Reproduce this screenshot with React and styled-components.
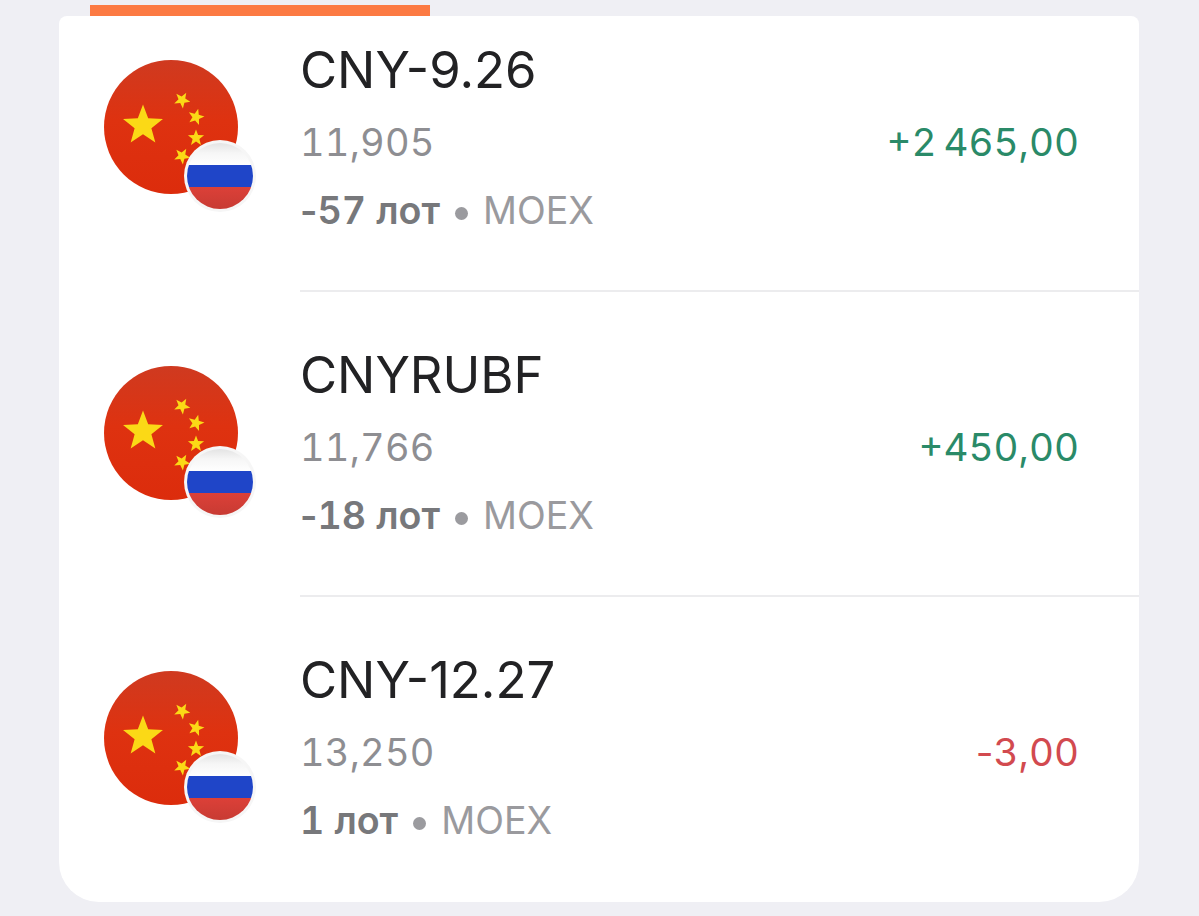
import React from 'react'
import styled, { createGlobalStyle } from 'styled-components'

const positions = [
  { id: 1, name: 'CNY-9.26', price: '11,905', lots: '-57 лот', result: '+2\u202f465,00', up: true },
  { id: 2, name: 'CNYRUBF', price: '11,766', lots: '-18 лот', result: '+450,00', up: true },
  { id: 3, name: 'CNY-12.27', price: '13,250', lots: '1 лот', result: '-3,00', up: false },
]

const starPoints = (cx, cy, r, rot = -90) => {
  const pts = []
  for (let i = 0; i < 10; i++) {
    const rad = i % 2 ? r * 0.42 : r
    const a = ((rot + i * 36) * Math.PI) / 180
    pts.push(`${(cx + rad * Math.cos(a)).toFixed(2)},${(cy + rad * Math.sin(a)).toFixed(2)}`)
  }
  return pts.join(' ')
}

const FlagIcon = () => (
  <svg width="154" height="154" viewBox="0 0 154 154">
    <defs>
      <linearGradient id="cnRed" x1="0" y1="0" x2="0" y2="1">
        <stop offset="0" stopColor="#cf3a20" />
        <stop offset="0.45" stopColor="#de3210" />
        <stop offset="1" stopColor="#dc2c0c" />
      </linearGradient>
      <clipPath id="ruClip">
        <circle cx="116" cy="116" r="33" />
      </clipPath>
      <linearGradient id="ruWhite" x1="0" y1="0" x2="0" y2="1">
        <stop offset="0" stopColor="#dedede" />
        <stop offset="0.5" stopColor="#f6f6f6" />
        <stop offset="1" stopColor="#ffffff" />
      </linearGradient>
      <linearGradient id="ruRed" x1="0" y1="0" x2="0" y2="1">
        <stop offset="0" stopColor="#dc4038" />
        <stop offset="1" stopColor="#c43a32" />
      </linearGradient>
    </defs>
    <circle cx="67" cy="67" r="67" fill="url(#cnRed)" />
    <polygon points={starPoints(39, 65.5, 21)} fill="#fbd916" />
    <polygon points={starPoints(78, 40, 8.5, -60)} fill="#fbd916" />
    <polygon points={starPoints(92, 57, 8.5, -75)} fill="#fbd916" />
    <polygon points={starPoints(92, 78, 8.5, -90)} fill="#fbd916" />
    <polygon points={starPoints(78, 96, 8.5, -60)} fill="#fbd916" />
    <circle cx="116" cy="116" r="36" fill="#f6f6f6" />
    <g clipPath="url(#ruClip)">
      <rect x="80" y="80" width="72" height="26" fill="url(#ruWhite)" />
      <rect x="80" y="105" width="72" height="22" fill="#1f45c8" />
      <rect x="80" y="127" width="72" height="26" fill="url(#ruRed)" />
    </g>
  </svg>
)

// tabular digits make the hyphen too wide, so the minus keeps its own width
const Signed = ({ text }) =>
  text[0] === '-' ? (
    <>
      <Sign>-</Sign>
      {text.slice(1)}
    </>
  ) : (
    text
  )

export default function App() {
  return (
    <>
      <GlobalStyle />
      <Progress />
      <Card>
        {positions.map((p, i) => (
          <Row key={p.id} $first={i === 0}>
            <Avatar $first={i === 0}>
              <FlagIcon />
            </Avatar>
            <Body $first={i === 0} $last={i === positions.length - 1}>
              <Info>
                <Name>{p.name}</Name>
                <Price>{p.price}</Price>
                <Meta>
                  <Lots>
                    <Signed text={p.lots} />
                  </Lots>
                  <Dot />
                  <Exchange>MOEX</Exchange>
                </Meta>
              </Info>
              <Result $up={p.up}>
                <Signed text={p.result} />
              </Result>
            </Body>
          </Row>
        ))}
      </Card>
    </>
  )
}

const GlobalStyle = createGlobalStyle`
  html, body {
    margin: 0;
    height: 100%;
    overflow: hidden;
    background: #efeff4;
    font-family: Inter, "Liberation Sans", sans-serif;
  }
`

const Progress = styled.div`
  width: 340px;
  height: 11px;
  margin: 5px 0 0 90px;
  background: #fc7a43;
`

const Card = styled.div`
  width: 1080px;
  height: 886px;
  margin-left: 59px;
  background: #fff;
  border-radius: 8px 8px 40px 40px;
  overflow: hidden;
`

const Row = styled.div`
  display: flex;
  height: ${(p) => (p.$first ? '276px' : '305px')};
`

const Avatar = styled.div`
  flex: none;
  width: 134px;
  height: 154px;
  margin: ${(p) => (p.$first ? '44px' : '74px')} 62px 0 45px;
  svg {
    display: block;
    overflow: visible;
  }
`

const Body = styled.div`
  flex: 1;
  display: flex;
  justify-content: space-between;
  align-items: flex-start;
  box-sizing: border-box;
  padding-top: ${(p) => (p.$first ? '19px' : '48px')};
  border-bottom: ${(p) => (p.$last ? 'none' : '2px solid #ececee')};
`

const Info = styled.div`
  display: flex;
  flex-direction: column;
`

const Name = styled.div`
  font-size: 50.8px;
  line-height: 70px;
  color: #222224;
`

const Price = styled.div`
  font-size: 38px;
  line-height: 74px;
  font-variant-numeric: tabular-nums;
  letter-spacing: 0.2px;
  color: #8e8e92;
`

const Meta = styled.div`
  display: flex;
  align-items: center;
  font-size: 37.6px;
  line-height: 64px;
  font-variant-numeric: tabular-nums;
`

const Sign = styled.span`
  font-variant-numeric: normal;
`

const Lots = styled.span`
  font-weight: 600;
  color: #77787b;
`

const Dot = styled.span`
  width: 13px;
  height: 13px;
  margin: 4px 15px 0;
  border-radius: 50%;
  background: #9b9b9f;
`

const Exchange = styled.span`
  color: #9a9a9e;
`

const Result = styled.div`
  margin: 70px 60px 0 0;
  font-size: 38.6px;
  line-height: 74px;
  font-variant-numeric: tabular-nums;
  color: ${(p) => (p.$up ? '#2a8a68' : '#d24a4f')};
`
